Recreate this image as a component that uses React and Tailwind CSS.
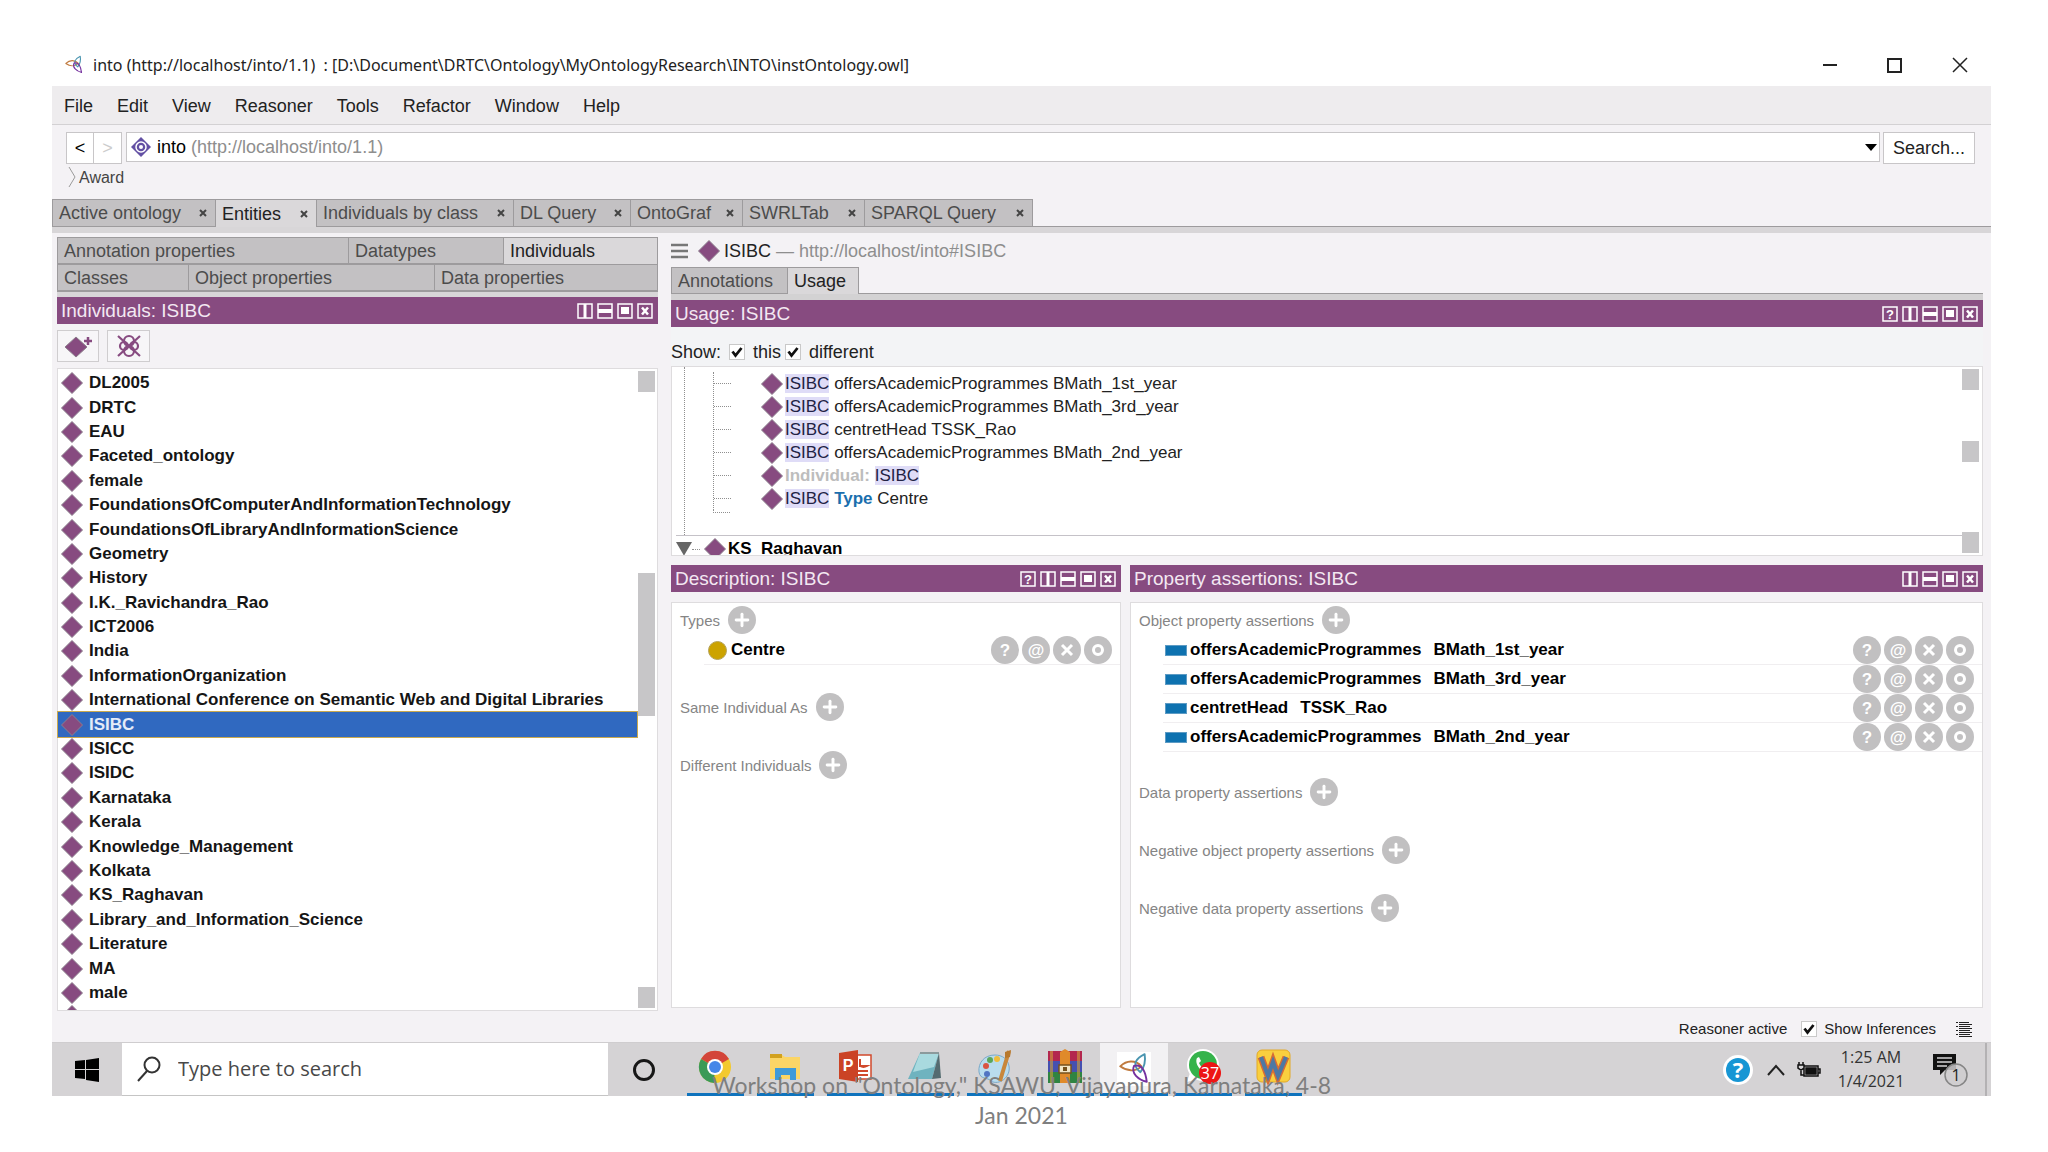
import { Plus } from 'lucide-react';

const individuals = [
    'DL2005', 'DRTC', 'EAU', 'Faceted_ontology', 'female',
    'FoundationsOfComputerAndInformationTechnology',
    'FoundationsOfLibraryAndInformationScience',
    'Geometry', 'History', 'I.K._Ravichandra_Rao', 'ICT2006', 'India',
    'InformationOrganization',
    'International Conference on Semantic Web and Digital Libraries',
    'ISIBC', 'ISICC', 'ISIDC', 'Karnataka', 'Kerala', 'Knowledge_Management',
    'Kolkata', 'KS_Raghavan', 'Library_and_Information_Science', 'Literature',
    'MA', 'male'
];

const mainTabs = [
    { label: 'Active ontology', width: 'w-[163px]' },
    { label: 'Entities', width: 'w-[101px]', active: true },
    { label: 'Individuals by class', width: 'w-[197px]' },
    { label: 'DL Query', width: 'w-[117px]' },
    { label: 'OntoGraf', width: 'w-[112px]' },
    { label: 'SWRLTab', width: 'w-[122px]' },
    { label: 'SPARQL Query', width: 'w-[168px]' }
];

const usages = [
    'offersAcademicProgrammes BMath_1st_year',
    'offersAcademicProgrammes BMath_3rd_year',
    'centretHead TSSK_Rao',
    'offersAcademicProgrammes BMath_2nd_year'
];

const assertions = [
    ['offersAcademicProgrammes', 'BMath_1st_year'],
    ['offersAcademicProgrammes', 'BMath_3rd_year'],
    ['centretHead', 'TSSK_Rao'],
    ['offersAcademicProgrammes', 'BMath_2nd_year']
];

const Diamond = () => (
    <svg viewBox="0 0 22 22" className="size-[22px] shrink-0" aria-hidden="true">
        <path d="M11 0.500L21.500 11L11 21.500L0.500 11Z" fill="#874b80" stroke="#8c7f8c" strokeWidth="1" />
    </svg>
);

const ProtegeMark = ({ className }) => (
    <svg viewBox="0 0 32 32" className={className} fill="none" strokeWidth="1.800" strokeLinejoin="round" aria-hidden="true">
        <path d="M3 13.500C9 8 17 7 23 13.500C17 19 9 18 3 13.500Z" stroke="#c07a3e" />
        <path d="M26 2C18 6 13 12 22 19C26 14 27 8 26 2Z" stroke="#4a95b0" />
        <path d="M28 28C20 26 13 20 16 13C24 11 27 19 28 28Z" stroke="#75319f" />
    </svg>
);

const paneIcons = {
    help: <text x="8" y="13" textAnchor="middle" fontSize="13" fontWeight="bold" fill="white" fontFamily="Liberation Sans">?</text>,
    columns: <path d="M6.500 1H9.500V15H6.500Z" fill="white" />,
    rows: <path d="M1 6H15V10H1Z" fill="white" />,
    float: <path d="M4 4H12V11H4Z" fill="white" />,
    close: <path d="M5 4.500L11 11.500M11 4.500L5 11.500" stroke="white" strokeWidth="2.500" />
};

const PaneHeader = ({ title, help = false }) => {
    const names = help
        ? ['help', 'columns', 'rows', 'float', 'close']
        : ['columns', 'rows', 'float', 'close'];
    return (
        <div className="flex h-[27px] shrink-0 items-center justify-between bg-[#874b80] pr-[5px] pl-1">
            <h2 className="pt-px text-[19px] leading-[26px] text-[#f3e8f2]">{title}</h2>
            <div className="flex gap-1 pt-px">
                {names.map((name) => (
                    <button key={name} type="button" aria-label={name} className="h-4">
                        <svg viewBox="0 0 16 16" className="size-4">
                            <rect x="1" y="1" width="14" height="14" fill="none" stroke="white" strokeWidth="1.500" />
                            {paneIcons[name]}
                        </svg>
                    </button>
                ))}
            </div>
        </div>
    );
};

const AddButton = ({ label }) => (
    <button type="button" aria-label={label} className="flex size-7 items-center justify-center rounded-full bg-[#c1c0c1] text-white">
        <Plus className="size-5" strokeWidth={3.5} />
    </button>
);

const Section = ({ title }) => (
    <div className="flex h-7 items-center gap-2 pl-2 text-[15px] text-[#858585]">
        <h3 className="pt-[2px]">{title}</h3>
        <AddButton label={`Add ${title}`} />
    </div>
);

const RowActions = () => (
    <div className="ml-auto flex gap-[3px] pr-2">
        {['?', '@', 'x', 'o'].map((kind) => (
            <button key={kind} type="button" aria-label={`Action ${kind}`} className="size-7 rounded-full bg-[#c1c0c1]">
                <svg viewBox="0 0 28 28" className="size-7" fill="none" stroke="white" strokeWidth="3">
                    {kind === 'x' && <path d="M9 9L19 19M19 9L9 19" />}
                    {kind === 'o' && <circle cx="14" cy="14" r="4.500" />}
                    {(kind === '?' || kind === '@') && (
                        <text x="14" y="20" textAnchor="middle" fontSize="17" fontWeight="bold" fill="white" stroke="none" fontFamily="Liberation Sans">{kind}</text>
                    )}
                </svg>
            </button>
        ))}
    </div>
);

const Tab = ({ label, active, className = '', children }) => (
    <button
        type="button"
        role="tab"
        aria-selected={Boolean(active)}
        className={`flex h-full items-center justify-between border-t border-l border-[#9d9b9d] pr-2 pl-[6px] text-left text-[18px] leading-6 whitespace-nowrap ${active ? 'bg-[#dad8da] text-[#222222]' : 'border-b bg-[#c3c1c3] text-[#4c4c4c]'
            } ${className}`}
    >
        <span>{label}</span>
        {children}
    </button>
);

const Check = ({ label, className = '', box = 'mr-2' }) => (
    <label className={`flex items-center ${className}`}>
        <span className={`grid size-4 border border-[#c9c9c9] bg-white ${box}`}>
            <input type="checkbox" defaultChecked className="peer col-start-1 row-start-1 appearance-none" />
            <svg viewBox="0 0 14 14" className="pointer-events-none col-start-1 row-start-1 hidden size-[14px] peer-checked:block" fill="none" stroke="#111111" strokeWidth="2.800">
                <path d="M2.500 6.500L5.500 10.500L11.500 3" />
            </svg>
        </span>
        {label}
    </label>
);

const Scroller = ({ className = '' }) => <div className={`w-[17px] bg-[#c7c6c8] ${className}`} />;

const IndividualsPane = () => (
    <section className="flex w-[601px] shrink-0 flex-col">
        <div role="tablist" className="border-r border-b border-[#9d9b9d]">
            <div className="flex h-[27px]">
                <Tab label="Annotation properties" className="w-[291px]" />
                <Tab label="Datatypes" className="w-[155px]" />
                <Tab label="Individuals" active className="flex-1" />
            </div>
            <div className="flex h-[27px]">
                <Tab label="Classes" className="w-[131px]" />
                <Tab label="Object properties" className="w-[246px]" />
                <Tab label="Data properties" className="flex-1" />
            </div>
        </div>
        <div className="h-[5px] shrink-0 bg-[#d8d6d8]" />
        <PaneHeader title="Individuals: ISIBC" />
        <div className="flex gap-2 py-[6px]">
            <button type="button" aria-label="Add individual" className="flex h-8 w-[42px] items-center justify-center border border-[#cfcdcf] bg-[#f7f6f8]">
                <svg viewBox="0 0 30 26" className="h-[26px] w-[30px]">
                    <path d="M13 4L24 14L13 24L2 14Z" fill="#874b80" stroke="#8c7f8c" />
                    <path d="M25 4V12M21 8H29" stroke="#874b80" strokeWidth="2.500" />
                </svg>
            </button>
            <button type="button" aria-label="Delete individual" className="flex h-8 w-[43px] items-center justify-center border border-[#cfcdcf] bg-[#f7f6f8]">
                <svg viewBox="0 0 26 26" className="size-[26px]" fill="none" stroke="#874b80" strokeWidth="2.200">
                    <path d="M2 3L24 23M24 3L2 23" />
                    <circle cx="13" cy="8" r="5" />
                    <circle cx="13" cy="18" r="5" />
                    <circle cx="8" cy="13" r="4" />
                    <circle cx="18" cy="13" r="4" />
                </svg>
            </button>
        </div>
        <div className="flex min-h-0 flex-1 border border-[#dedcde] bg-white">
            <div className="flex min-w-0 flex-1 flex-col pt-[2px]">
                <ul className="flex min-h-0 flex-1 flex-col">
                    {individuals.map((name) => (
                        <li
                            key={name}
                            className={`flex min-h-0 flex-1 items-center gap-[6px] pl-[3px] text-[17px] leading-5 font-bold whitespace-nowrap ${name === 'ISIBC' ? 'bg-[#3069c0] text-[#e4ecf8] outline outline-[#c9a94e]' : 'text-[#151515]'
                                }`}
                        >
                            <Diamond />
                            {name}
                        </li>
                    ))}
                </ul>
                <div className="h-[5px] overflow-hidden pl-[3px]">
                    <Diamond />
                </div>
            </div>
            <div className="flex w-5 flex-col py-[2px] pl-px">
                <Scroller className="h-[21px]" />
                <Scroller className="mt-[181px] h-[143px]" />
                <Scroller className="mt-auto h-[21px]" />
            </div>
        </div>
    </section>
);

const UsageLine = ({ children }) => (
    <li className="flex h-[23px] items-center">
        <span className="w-[17px] border-t border-dotted border-[#8f8f8f]" />
        <span className="ml-[30px] flex items-center gap-[2px]">
            <Diamond />
            <span>{children}</span>
        </span>
    </li>
);

const Mark = () => <mark className="bg-[#dfdcf7] text-[#222244]">ISIBC</mark>;

const UsagePane = () => (
    <section>
        <PaneHeader title="Usage: ISIBC" help />
        <div className="flex h-[39px] items-center bg-[#f3f4f6] pt-[11px] text-[18px] text-[#222222]">
            Show:
            <Check label="this" className="ml-2" />
            <Check label="different" className="ml-1" />
        </div>
        <div className="flex h-[190px] overflow-hidden border border-[#dedcde] bg-white">
            <div className="min-w-0 flex-1 pl-1">
                <div className="ml-2 h-[168px] border-l border-dotted border-[#8f8f8f] pt-[5px]">
                    <ul className="ml-7 h-[138px] border-l border-dotted border-[#8f8f8f] text-[17px] leading-[22px] text-[#222222]">
                        {usages.map((text) => (
                            <UsageLine key={text}><Mark /> {text}</UsageLine>
                        ))}
                        <UsageLine><b className="text-[#bdbdbd]">Individual:</b> <Mark /></UsageLine>
                        <UsageLine><Mark /> <b className="text-[#1b6fae]">Type</b> Centre</UsageLine>
                    </ul>
                    <div className="ml-7 h-[3px] w-[17px] border-b border-l border-dotted border-[#8f8f8f]" />
                </div>
                <div className="flex h-[27px] items-center border-t border-[#c5c2c8] text-[17px] font-bold">
                    <svg viewBox="0 0 14 12" className="w-4"><path d="M0 0H14L7 12Z" fill="#666666" /></svg>
                    <span className="mr-1 w-2 border-t border-dotted border-[#8f8f8f]" />
                    <Diamond />
                    <span className="ml-[2px]">KS_Raghavan</span>
                </div>
            </div>
            <div className="flex w-5 flex-col py-[2px]">
                <Scroller className="h-[21px]" />
                <Scroller className="mt-[51px] h-[21px]" />
                <Scroller className="mt-auto h-[21px]" />
            </div>
        </div>
    </section>
);

const DescriptionPane = () => (
    <section className="flex w-[450px] shrink-0 flex-col">
        <PaneHeader title="Description: ISIBC" help />
        <div className="mt-[10px] flex-1 border border-[#dedcde] bg-white pt-[3px]">
            <Section title="Types" />
            <div className="mt-[2px] ml-8 flex h-[29px] items-center border-b border-[#f0eef0] pl-1 text-[17px] font-bold">
                <span className="mr-1 size-[19px] rounded-full border border-[#b5a35a] bg-[#cca300]" />
                Centre
                <RowActions />
            </div>
            <div className="mt-7"><Section title="Same Individual As" /></div>
            <div className="mt-[30px]"><Section title="Different Individuals" /></div>
        </div>
    </section>
);

const PropertyPane = () => (
    <section className="flex min-w-0 flex-1 flex-col">
        <PaneHeader title="Property assertions: ISIBC" />
        <div className="mt-[10px] flex-1 border border-[#dedcde] bg-white pt-[3px]">
            <Section title="Object property assertions" />
            <ul className="mt-[2px]">
                {assertions.map(([property, value]) => (
                    <li key={value} className="ml-8 flex h-[29px] items-center border-b border-[#f0eef0] pl-[2px] text-[17px] font-bold">
                        <span className="mr-[3px] h-[11px] w-[22px] border border-[#5d9bc4] bg-[#0e72b0]" />
                        <span className="mr-3">{property}</span>
                        <span>{value}</span>
                        <RowActions />
                    </li>
                ))}
            </ul>
            <div className="mt-[26px] flex flex-col gap-[30px]">
                <Section title="Data property assertions" />
                <Section title="Negative object property assertions" />
                <Section title="Negative data property assertions" />
            </div>
        </div>
    </section>
);

const taskIcons = {
    chrome: (
        <>
            <circle cx="20" cy="20" r="16" fill="#f3c92f" />
            <path d="M20 20L6 12A16 16 0 0 1 34 12Z" fill="#d3453a" />
            <path d="M20 20L6 12A16 16 0 0 0 19 36Z" fill="#3b9a57" />
            <circle cx="20" cy="20" r="8" fill="white" />
            <circle cx="20" cy="20" r="6" fill="#4686e8" />
        </>
    ),
    explorer: (
        <>
            <path d="M5 8H17L20 10H35V32H5Z" fill="#fbd566" />
            <path d="M5 7H17V11H5Z" fill="#d2a11f" />
            <path d="M10 33V21H31V33H25V28H16V33Z" fill="#3f9ad8" />
        </>
    ),
    powerpoint: (
        <>
            <path d="M20 8H36V32H20Z" fill="white" stroke="#d1492c" strokeWidth="1.500" />
            <path d="M25 12V19H32A7 7 0 0 1 25 19M23 24H33M23 28H33" stroke="#d1492c" strokeWidth="2" fill="none" />
            <path d="M4 6L23 3V35L4 32Z" fill="#cb4325" />
            <text x="13" y="24" textAnchor="middle" fontSize="16" fontWeight="bold" fill="white" fontFamily="Liberation Sans">P</text>
        </>
    ),
    notepad: (
        <>
            <path d="M15 6H34L27 32H3Z" fill="#6fb3bf" />
            <path d="M15 6H34L29 20L8 25Z" fill="#a9dadf" />
            <path d="M15 5H34V7H15Z" fill="#8b9a9c" />
            <path d="M34 6L36 31L27 32Z" fill="#546b70" />
        </>
    ),
    paint: (
        <>
            <path d="M20 8C9 8 3 16 4 25C5 33 13 30 16 34C24 39 36 30 34 19C33 12 27 8 20 8Z" fill="#b9dcee" stroke="#7aa9c9" />
            <circle cx="11" cy="19" r="3" fill="#d95442" />
            <circle cx="15" cy="13" r="3" fill="#5ba65b" />
            <circle cx="22" cy="12" r="3" fill="#efbd3d" />
            <circle cx="12" cy="27" r="3" fill="#5275c2" />
            <path d="M34 4L25 34" stroke="#c8873b" strokeWidth="4" />
            <path d="M30 5L36 3L35 10L30 11Z" fill="#b8792e" />
        </>
    ),
    winrar: (
        <>
            <path d="M3 4H37V14H3Z" fill="#b3274e" />
            <path d="M3 14H37V25H3Z" fill="#4550b0" />
            <path d="M3 25H37V36H3Z" fill="#2f8442" />
            <path d="M5 4H8V36H5ZM32 4H35V36H32Z" fill="#d0a03a" fillOpacity="0.600" />
            <path d="M15 5L20 2L25 5V36H15Z" fill="#e08a2a" />
            <path d="M14 18H26V26H14Z" fill="#f2e5c5" stroke="#75501c" strokeWidth="1.500" />
            <path d="M18 20H22V24H18Z" fill="#75501c" />
        </>
    ),
    whatsapp: (
        <>
            <circle cx="20" cy="18" r="16" fill="white" />
            <path d="M4 35L7 26L14 32Z" fill="white" />
            <circle cx="20" cy="18" r="14" fill="#35b34b" />
            <path d="M14 11C11 17 19 27 26 25L27 21L23 19L21 21C18 20 17 18 16 16L18 14L16 10Z" fill="white" />
            <circle cx="27" cy="26" r="11" fill="#ed1515" />
            <text x="27" y="32" textAnchor="middle" fontSize="16" fill="white" fontFamily="Open Sans">37</text>
        </>
    ),
    writer: (
        <>
            <rect x="4" y="3" width="33" height="32" rx="5" fill="#f9cf3f" stroke="#e3a927" />
            <path d="M8 10L15 29L20 15L25 29L33 10" fill="none" stroke="#d76c35" strokeWidth="7" />
            <path d="M8 10L15 29L20 15L25 29L33 10" fill="none" stroke="#4d78a4" strokeWidth="4" />
        </>
    )
};

const TaskButton = ({ name }) => (
    <button type="button" aria-label={name} className="flex w-[70px] flex-col items-center justify-between pt-[4px]">
        <svg viewBox="0 0 40 40" className="size-10">{taskIcons[name]}</svg>
        <span className="h-[3px] w-[57px] bg-[#0f73bd]" />
    </button>
);

const Taskbar = () => (
    <nav className="flex h-[54px] shrink-0 border-t border-[#cfcdcf] bg-[#d5d3d5] font-['Open_Sans','Noto_Sans',sans-serif]">
        <button type="button" aria-label="Start" className="flex w-[70px] items-center justify-center">
            <svg viewBox="0 0 24 24" className="size-6">
                <path d="M0 3L10 2V11H0ZM11 2L24 0V11H11ZM0 12H10V21L0 20ZM11 12H24V24L11 22Z" />
            </svg>
        </button>
        <label className="flex w-[486px] items-center border-b border-[#c5c5c5] bg-white pl-[14px]">
            <svg viewBox="0 0 26 26" className="mr-4 size-[26px]" fill="none" stroke="#333333" strokeWidth="2">
                <circle cx="16" cy="9" r="7.500" />
                <path d="M11 15L2 25" />
            </svg>
            <input type="text" aria-label="Search" placeholder="Type here to search" className="flex-1 text-[20px] outline-none placeholder:text-[#484848]" />
        </label>
        <button type="button" aria-label="Cortana" className="flex w-[71px] items-center justify-center">
            <span className="size-[22px] rounded-full border-3 border-[#171717]" />
        </button>
        <div className="flex pl-px">
            {['chrome', 'explorer', 'powerpoint', 'notepad', 'paint', 'winrar'].map((name) => (
                <TaskButton key={name} name={name} />
            ))}
            <button type="button" aria-label="Protege" className="flex w-[68px] flex-col items-center justify-between bg-[#f2f1f3] pt-[9px]">
                <ProtegeMark className="size-[34px] bg-white" />
                <span className="h-[3px] w-full bg-[#0f73bd]" />
            </button>
            {['whatsapp', 'writer'].map((name) => (
                <TaskButton key={name} name={name} />
            ))}
        </div>
        <div className="ml-auto flex items-center">
            <button type="button" aria-label="Help">
                <svg viewBox="0 0 30 30" className="size-[30px]">
                    <circle cx="15" cy="15" r="15" fill="white" />
                    <circle cx="15" cy="15" r="12" fill="#1796d4" />
                    <text x="15" y="23" textAnchor="middle" fontSize="22" fontWeight="bold" fill="white" fontFamily="Open Sans">?</text>
                </svg>
            </button>
            <button type="button" aria-label="Hidden icons" className="ml-[14px]">
                <svg viewBox="0 0 18 12" className="w-[18px]" fill="none" stroke="#222222" strokeWidth="2"><path d="M1 11L9 2L17 11" /></svg>
            </button>
            <svg viewBox="0 0 24 16" className="ml-3 w-6" fill="none" stroke="#111111" strokeWidth="1.500">
                <path d="M7 4H21V14H7ZM21 7H23V11H21M2 0V3M6 0V3M1 3H7V6L4 8L1 6ZM4 8V13H7" />
                <path d="M9 6H19V12H9Z" fill="#111111" />
            </svg>
            <div className="ml-4 w-[68px] pb-[2px] text-center text-[16px] leading-6 whitespace-nowrap text-[#333333]">
                <div>1:25 AM</div>
                <div>1/4/2021</div>
            </div>
            <button type="button" aria-label="Notifications" className="ml-7">
                <svg viewBox="0 0 36 34" className="h-[34px] w-9">
                    <path d="M0 1H23V17H12L7 22V17H0Z" fill="#111111" />
                    <path d="M4 5H19M4 9H19M4 13H14" stroke="#d5d3d5" strokeWidth="1.500" />
                    <circle cx="23" cy="22" r="11" fill="#cfcdcf" fillOpacity="0.850" stroke="#858585" strokeWidth="1.500" />
                    <text x="23" y="28" textAnchor="middle" fontSize="16" fill="#222222" fontFamily="Open Sans">1</text>
                </svg>
            </button>
            <span className="ml-4 h-[53px] w-[6px] border-l-2 border-[#b3b1b3]" />
        </div>
    </nav>
);

const App = () => {
    return (
        <div className="flex h-screen min-h-[1100px] flex-col bg-white pt-10 pr-[57px] pl-[52px] font-['Liberation_Sans',Arial,sans-serif]">
            <header className="flex h-[46px] shrink-0 items-center pt-1 pr-[23px] pl-3 font-['Noto_Sans','Open_Sans',sans-serif] text-[16px] text-[#222222]">
                <ProtegeMark className="mr-[9px] size-5" />
                <h1 className="whitespace-pre">into (http://localhost/into/1.1)  : [D:\Document\DRTC\Ontology\MyOntologyResearch\INTO\instOntology.owl]</h1>
                <div className="ml-auto flex items-center gap-[50px]">
                    <button type="button" aria-label="Minimize" className="h-[2px] w-[14px] bg-[#222222]" />
                    <button type="button" aria-label="Maximize" className="size-[15px] border-2 border-[#222222]" />
                    <button type="button" aria-label="Close">
                        <svg viewBox="0 0 16 16" className="size-4" stroke="#222222" strokeWidth="1.500"><path d="M1 1L15 15M15 1L1 15" /></svg>
                    </button>
                </div>
            </header>
            <div className="flex min-h-0 flex-1 flex-col bg-[#f4f2f5]">
                <nav className="flex h-[39px] shrink-0 items-center gap-6 border-b border-[#d3d1d3] bg-[#eeecee] pt-[2px] pl-3 text-[18px] text-[#222222]">
                    {['File', 'Edit', 'View', 'Reasoner', 'Tools', 'Refactor', 'Window', 'Help'].map((item) => (
                        <button key={item} type="button">{item}</button>
                    ))}
                </nav>
                <div className="flex items-start pt-[7px] pr-4 pl-[14px] text-[18px]">
                    <button type="button" className="h-8 w-7 border border-[#c8c6c8] bg-white">&lt;</button>
                    <button type="button" className="mr-1 h-8 w-7 border border-l-0 border-[#c8c6c8] bg-white text-[#cccccc]">&gt;</button>
                    <button type="button" className="mr-[3px] flex h-[30px] flex-1 items-center border border-[#c8c6c8] bg-white pr-[2px] pl-1">
                        <svg viewBox="0 0 20 20" className="mr-[6px] size-5">
                            <path d="M10 0L20 10L10 20L0 10Z" fill="#6350a4" />
                            <circle cx="10" cy="10" r="5" fill="none" stroke="white" strokeWidth="1.500" />
                            <circle cx="10" cy="10" r="2" fill="white" />
                        </svg>
                        into&nbsp;<span className="text-[#8e8e8e]">(http://localhost/into/1.1)</span>
                        <svg viewBox="0 0 12 7" className="ml-auto w-3"><path d="M0 0H12L6 7Z" /></svg>
                    </button>
                    <button type="button" className="h-8 w-[92px] border border-[#c8c6c8] bg-white text-[#222222]">Search...</button>
                </div>
                <div className="flex h-[35px] shrink-0 items-start gap-[3px] pt-[2px] pl-4 text-[16px] leading-6 text-[#444444]">
                    <svg viewBox="0 0 8 20" className="mt-px h-5 w-2" fill="none" stroke="#9a9a9a"><path d="M1 0L7 10L1 20" /></svg>
                    Award
                </div>
                <div role="tablist" className="flex h-7 shrink-0">
                    {mainTabs.map((tab) => (
                        <Tab key={tab.label} label={tab.label} active={tab.active} className={tab.width}>
                            <svg viewBox="0 0 8 8" className="size-2" stroke="#444444" strokeWidth="2"><path d="M1 1L7 7M7 1L1 7" /></svg>
                        </Tab>
                    ))}
                    <div className="flex-1 border-b border-l border-[#9d9b9d]" />
                </div>
                <div className="h-[6px] shrink-0 bg-[#d8d6d8]" />
                <main className="flex min-h-0 flex-1 gap-[13px] pt-1 pr-2 pl-[5px]">
                    <IndividualsPane />
                    <div className="flex min-w-0 flex-1 flex-col">
                        <div className="flex h-[30px] shrink-0 items-center pb-[3px] text-[18px] text-[#222222]">
                            <svg viewBox="0 0 17 16" className="mr-[10px] w-[17px]" stroke="#777777" strokeWidth="2.500"><path d="M0 2H17M0 8H17M0 14H17" /></svg>
                            <Diamond />
                            <span className="ml-1 pt-[2px] whitespace-pre">ISIBC <span className="text-[#8e8e8e]">— http://localhost/into#ISIBC</span></span>
                        </div>
                        <div role="tablist" className="flex h-[27px] shrink-0">
                            <Tab label="Annotations" className="w-[116px]" />
                            <Tab label="Usage" active className="w-[71px]" />
                            <div className="flex-1 border-b border-l border-[#9d9b9d]" />
                        </div>
                        <div className="h-[6px] shrink-0 bg-[#d3d2d3]" />
                        <UsagePane />
                        <div className="mt-[9px] flex min-h-0 flex-1 gap-[9px] pb-[3px]">
                            <DescriptionPane />
                            <PropertyPane />
                        </div>
                    </div>
                </main>
                <footer className="flex h-[31px] shrink-0 items-center justify-end pt-[5px] pr-[19px] text-[15px] text-[#222222]">
                    Reasoner active
                    <Check label="Show Inferences" className="ml-[14px]" box="mr-[7px]" />
                    <svg viewBox="0 0 16 16" className="ml-5 size-4" stroke="#222222" strokeWidth="1">
                        <path d="M0 1.500H2M0 5.500H2M0 9.500H2M0 13.500H2M3 1.500H13M3 3.500H16M3 5.500H14M3 7.500H16M3 9.500H14M3 11.500H16M3 13.500H14M3 15.500H16" />
                    </svg>
                </footer>
            </div>
            <Taskbar />
            <div className="h-14 shrink-0">
                <p className="relative z-10 mx-auto -mt-[26px] w-[640px] text-center font-[Lato,'Open_Sans',sans-serif] text-[23px] leading-[30px] text-[#7f7f7f]">
                    Workshop on &quot;Ontology,&quot; KSAWU, Vijayapura, Karnataka, 4-8 Jan 2021
                </p>
            </div>
        </div>
    );
};

export default App;
